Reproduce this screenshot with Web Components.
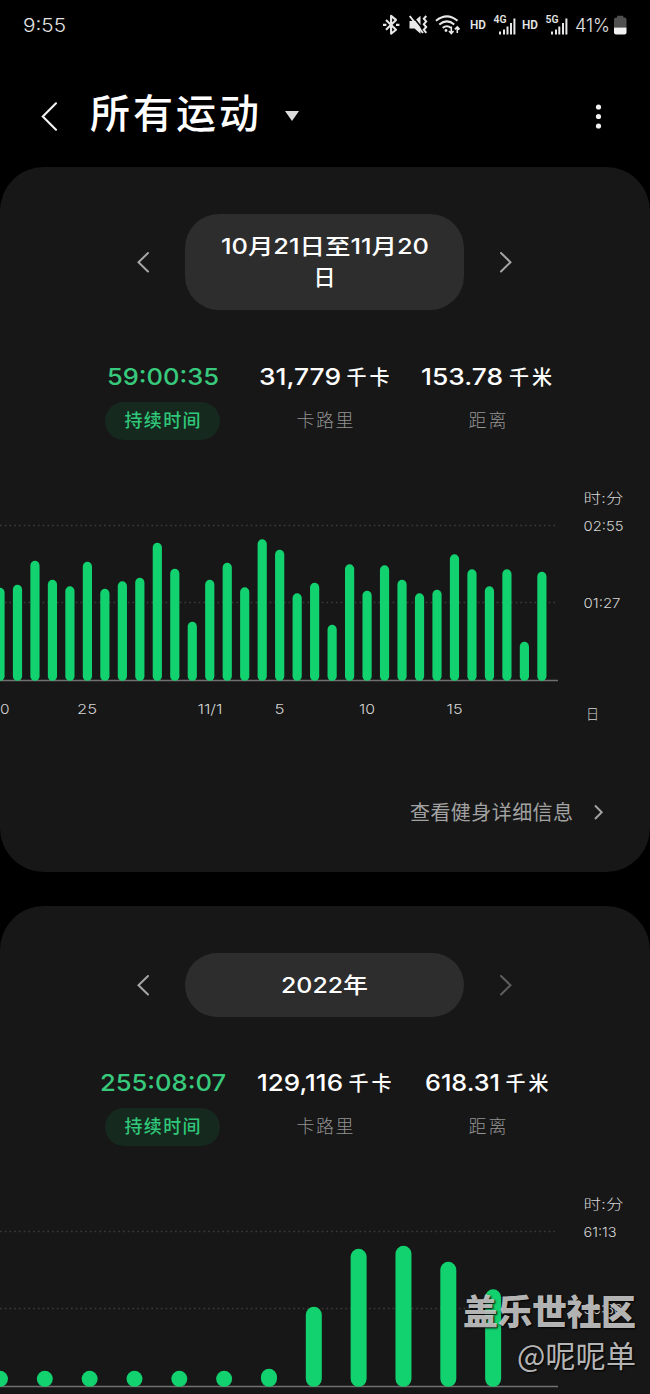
<!DOCTYPE html>
<html lang="zh-CN">
<head>
<meta charset="utf-8">
<title>所有运动</title>
<style>
html{background:#000}
body{margin:0;width:650px;height:1394px;overflow:hidden;background:#000;color:#fff;font-family:Inter,"Noto Sans CJK SC",sans-serif}
</style>
</head>
<body>
<exercise-page></exercise-page>
<script>
const define = (name, html, setup) => customElements.define(name, class extends HTMLElement {
  connectedCallback() {
    if (this.shadowRoot) return;
    const t = document.createElement('template');
    t.innerHTML = html;
    this.attachShadow({mode: 'open'}).appendChild(t.content.cloneNode(true));
    if (setup) setup.call(this, this.shadowRoot);
  }
});

/* Text fitted to a given width: Chinese by tracking, figures by stretching */
define('tracked-text', `<style>:host{display:inline-block;white-space:nowrap}span{display:inline-block;transform-origin:0 50%}</style><span><slot></slot></span>`, function (root) {
  const span = root.querySelector('span');
  const w = Number(this.getAttribute('w'));
  const natural = span.getBoundingClientRect().width;
  if (/\d/.test(this.textContent)) {
    span.style.transform = `scaleX(${w / natural})`;
    span.style.marginRight = (w - natural) + 'px';
  } else {
    const gap = (w - natural) / (this.textContent.length - 1);
    span.style.letterSpacing = gap + 'px';
    span.style.marginRight = -gap + 'px';
  }
});

define('status-bar', `<style>
:host{display:flex;height:50px;box-sizing:border-box;padding:0 23px 0 23px;align-items:center;justify-content:space-between;color:#e4e4e4;font-weight:300;font-size:18.5px}
svg{display:block}text{font-family:Roboto,sans-serif;font-weight:600;fill:#e4e4e4}
</style>
<tracked-text w="43">9:55</tracked-text>
<svg width="246" height="30" viewBox="381 9.5 246 30" fill="none" stroke="#e8e8e8">
<path d="M386 19.5l10 9.7-4.9 4V15.4l4.9 4-10 9.8" stroke-width="2.1" stroke-linejoin="round"/>
<path d="M383 24.4h3.4M396 24.4h3.4" stroke-width="2.2"/>
<path d="M409.5 20.5h5l6-5.3v18l-6-5.2h-5z" fill="#e8e8e8" stroke="none"/>
<path d="M411.5 14.6l13 16" stroke="#000" stroke-width="1.6"/><path d="M409.7 15.5l13.3 17" stroke-width="2"/>
<path d="M426.3 15.5l-2.5 2.7 2.4 2.7-2.4 2.8 2.4 2.8-2.4 2.8 2.5 3" stroke-width="2"/>
<path d="M436 20.3q11-8.8 21.5 0M439.3 24q7.6-6.3 15 0M442.7 27.4q4.2-3.4 8.2 0" stroke-width="2"/>
<circle cx="446" cy="30" r="1.4" fill="#e8e8e8" stroke="none"/>
<path d="M451.3 26v7m-2.3-2.5l2.3 2.5 2.2-2.5M457.3 32.5v-6m-2.4 2.4l2.4-2.4 2.3 2.4" stroke-width="1.6"/>
<text x="470" y="28.3" font-size="12.5" textLength="16" lengthAdjust="spacingAndGlyphs" stroke="none">HD</text>
<text x="493.5" y="22.5" font-size="10.8" textLength="13" lengthAdjust="spacingAndGlyphs" stroke="none">4G</text>
<path d="M500 31v3M504 29v5M507.5 26v8M511 22.5v11.5M514.4 18v16" stroke-width="2"/>
<text x="522" y="28.3" font-size="12.5" textLength="16" lengthAdjust="spacingAndGlyphs" stroke="none">HD</text>
<text x="545.5" y="22.5" font-size="10.8" textLength="13" lengthAdjust="spacingAndGlyphs" stroke="none">5G</text>
<path d="M552 31v3M556 29v5M559.3 26v8M563 22.5v11.5M566.4 18v16" stroke-width="2"/>
<text x="575" y="31" font-size="18.5" textLength="35" lengthAdjust="spacingAndGlyphs" stroke="none" style="font-family:Inter;font-weight:300">41%</text>
<path d="M616 17h1.2v-1.8h6.1V17h1.2q2 0 2 2v8h-12.5v-8q0-2 2-2z" fill="#505050" stroke="none"/>
<path d="M614 27h12.5v5q0 2-2 2H616q-2 0-2-2z" fill="#f2f2f2" stroke="none"/>
</svg>`);

define('page-header', `<style>
:host{display:flex;height:117px;box-sizing:border-box;padding:15px 44px 0 40px;align-items:center}
h1{margin:0 0 0 32px;font:500 40px/50px Inter,"Noto Sans CJK SC",sans-serif;padding-bottom:4px}
.tri{margin-left:26px;margin-top:-1px}.dots{margin-left:auto}
svg{display:block}
</style>
<svg width="18" height="30" viewBox="0 0 18 30" fill="none" stroke="#f4f4f4" stroke-width="2.1" stroke-linecap="round"><path d="M16 2.3L2.8 15.5 16 28.7"/></svg>
<h1><tracked-text w="169">所有运动</tracked-text></h1>
<svg class="tri" width="14" height="11"><path d="M0 1h14L7 11z" fill="#dcdcdc"/></svg>
<svg class="dots" width="15" height="28"><g fill="#f2f2f2"><circle cx="7.5" cy="5" r="2.6"/><circle cx="7.5" cy="14.5" r="2.6"/><circle cx="7.5" cy="24" r="2.6"/></g></svg>`);

define('period-picker', `<style>
:host{display:flex;justify-content:center;align-items:center;gap:35px;margin-right:1px}
.pill{width:279px;min-height:64px;box-sizing:border-box;border-radius:34px;background:#2d2d2d;display:flex;flex-direction:column;align-items:center;justify-content:center;font-weight:500;font-size:22px;line-height:31px;padding:17px 0}
:host([last]) .pill{padding:16px 0}
svg{display:block}:host([last]) .next{opacity:.5}
</style>
<svg width="14" height="24" fill="none" stroke="#a6a6a6" stroke-width="2" stroke-linecap="round"><path d="M12 3L2.5 12.2 12 21.5"/></svg>
<div class="pill"><slot></slot></div>
<svg class="next" width="14" height="24" fill="none" stroke="#a6a6a6" stroke-width="2" stroke-linecap="round"><path d="M2 3l9.5 9.2L2 21.5"/></svg>`);

define('stat-item', `<style>
:host{display:flex;flex-direction:column;align-items:center;width:162.5px}
.v{height:36px;line-height:37px;font-size:23.5px;font-weight:500;white-space:nowrap;display:flex;align-items:baseline;gap:6px}
.l{margin-top:8px;height:38px;box-sizing:border-box;line-height:37px;font-size:18px;font-weight:300;color:#929292}
:host(:not([active])) .v{margin-right:2px}
:host([active]) .v{color:#37ca7d}
:host([active]) .l{width:115px;text-align:center;border-radius:19px;background:#16291f;color:#2fc779;font-weight:500}
</style><div class="v"><slot name="value"></slot></div><div class="l"><slot></slot></div>`);

define('stat-row', `<style>:host{display:flex;justify-content:center;margin-top:48px}:host([tight]){margin-top:47px}</style><slot></slot>`);

define('bar-chart', `<style>:host{display:block}svg{display:block}
text{font-family:Inter,"Noto Sans CJK SC",sans-serif;font-size:13.5px;font-weight:300;fill:#d4d4d4}</style><div></div>`, function (root) {
  const d = JSON.parse(this.getAttribute('data'));
  const base = 193.5;
  const grid = y => `<path d="M0 ${y}h557" stroke="#3b3b3b" stroke-width="1.3" stroke-dasharray="1.7 3.03"/>`;
  const label = (x, y, s, w, a) => `<text x="${x}" y="${y}" ${a ? 'text-anchor="middle"' : ''} textLength="${w}" lengthAdjust="spacingAndGlyphs">${s}</text>`;
  const bars = d.bars.map((h, i) => `<rect x="${i * d.pitch - d.width / 2}" y="${base + .3 - h}" width="${d.width}" height="${h}" rx="${d.width / 2}"/>`).join('');
  root.querySelector('div').innerHTML = `<svg width="650" height="250">${grid(38.5)}${grid(115.5)}
    <path d="M0 ${base}h558" stroke="#707070" stroke-width="1.5"/><g fill="#12d16f">${bars}</g>
    ${label(583.5, 16, '时:分', 40)}${label(583.5, 44, d.y[0], d.yw[0])}${label(583.5, 121, d.y[1], d.yw[1])}
    ${d.x.map(([x, s, w]) => label(x, 226.5, s, w, 1)).join('')}${d.unit ? label(592.5, 231.5, d.unit, 13, 1) : ''}</svg>`;
});

define('summary-card', `<style>
:host{display:block;box-sizing:border-box;height:705px;padding-top:47px;border-radius:44px;background:#171717;overflow:hidden;margin-bottom:34px}
::slotted(bar-chart){margin-top:47px}
</style><slot></slot>`);

define('details-link', `<style>
:host{display:flex;justify-content:flex-end;align-items:center;gap:20px;padding-right:46px;margin-top:60px;height:28px;font-size:20px;color:#a2a2a2}
svg{display:block;margin-top:2px}</style><slot></slot>
<svg width="11" height="18" fill="none" stroke="#a2a2a2" stroke-width="2"><path d="M2 2.5l6.7 6.7L2 16"/></svg>`);

define('photo-credit', `<style>
:host{position:absolute;right:14px;top:1286px;display:flex;flex-direction:column;align-items:flex-end;color:rgba(212,212,212,.87);text-shadow:1px 1px 2px #000;font-family:"Noto Sans CJK SC",sans-serif}
b{font-size:35px;line-height:48px;font-weight:900}i{font-style:normal;font-size:30px;line-height:40px;font-weight:400}
</style><b><tracked-text w="173">盖乐世社区</tracked-text></b><i><tracked-text w="119">@呢呢单</tracked-text></i>`);

define('exercise-page', `<style>:host{display:block;position:relative;width:650px;height:1394px;overflow:hidden}</style>
<status-bar></status-bar><page-header></page-header>
<summary-card>
<period-picker><tracked-text w="208">10月21日至11月20</tracked-text><span>日</span></period-picker>
<stat-row>
<stat-item active><tracked-text slot="value" w="112">59:00:35</tracked-text><tracked-text w="76">持续时间</tracked-text></stat-item>
<stat-item><tracked-text slot="value" w="82">31,779</tracked-text><tracked-text slot="value" w="43" style="font-size:20px">千卡</tracked-text><tracked-text w="57">卡路里</tracked-text></stat-item>
<stat-item><tracked-text slot="value" w="82">153.78</tracked-text><tracked-text slot="value" w="43" style="font-size:20px">千米</tracked-text><tracked-text w="38">距离</tracked-text></stat-item>
</stat-row>
<bar-chart data='{"pitch":17.48,"width":9.2,"bars":[93,96,120,101,94.5,119,92,99.5,103,138,112,59,101,118,93.5,141.5,131,87.5,98,56,116.5,90,115.5,101,87.5,91,126.5,111.5,94.5,111.5,39,109],"y":["02:55","01:27"],"yw":[40,37],"x":[[0,"20",19],[87,"25",20],[210,"11/1",25],[279.5,"5",10],[367,"10",16],[454.5,"15",16]],"unit":"日"}'></bar-chart>
<details-link><tracked-text w="163">查看健身详细信息</tracked-text></details-link>
</summary-card>
<summary-card>
<period-picker last><tracked-text w="87">2022年</tracked-text></period-picker>
<stat-row tight>
<stat-item active><tracked-text slot="value" w="126">255:08:07</tracked-text><tracked-text w="76">持续时间</tracked-text></stat-item>
<stat-item><tracked-text slot="value" w="86">129,116</tracked-text><tracked-text slot="value" w="43" style="font-size:20px">千卡</tracked-text><tracked-text w="57">卡路里</tracked-text></stat-item>
<stat-item><tracked-text slot="value" w="75">618.31</tracked-text><tracked-text slot="value" w="43" style="font-size:20px">千米</tracked-text><tracked-text w="38">距离</tracked-text></stat-item>
</stat-row>
<bar-chart data='{"pitch":44.83,"width":16,"bars":[16,16,16,16,16,16,18,80,138,141,125,97.5],"y":["61:13","30:36"],"yw":[33,39],"x":[],"unit":""}'></bar-chart>
</summary-card>
<photo-credit></photo-credit>`);
</script>
</body>
</html>
